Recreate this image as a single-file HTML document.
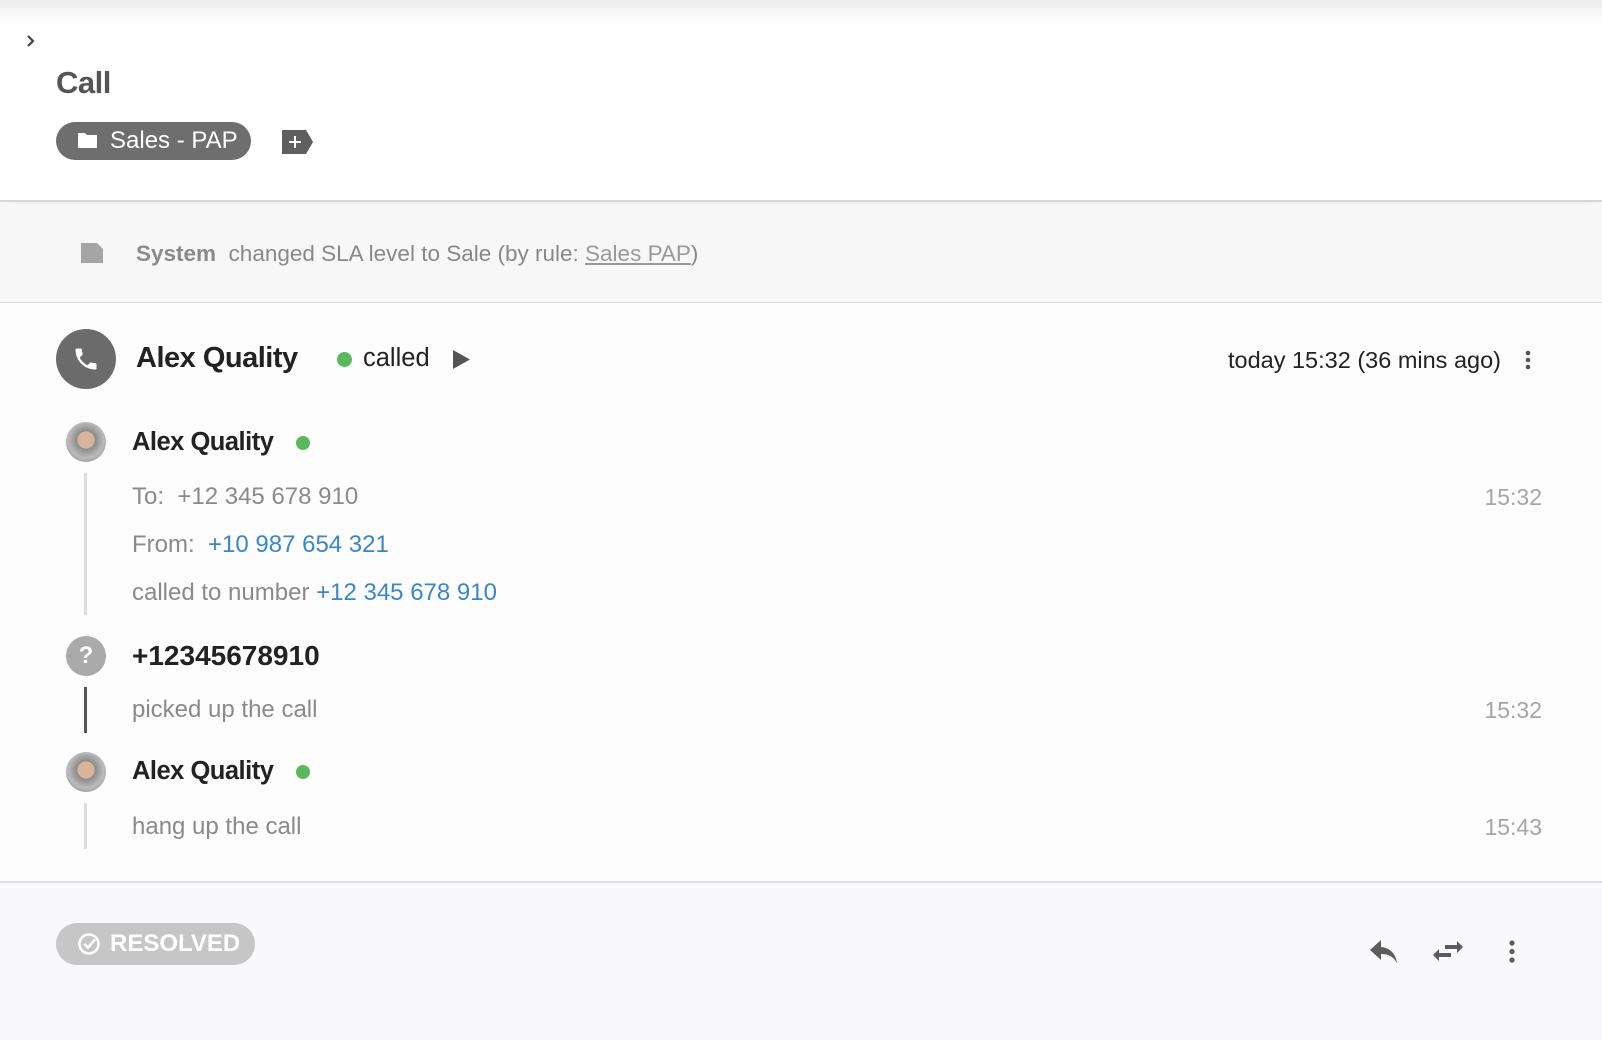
<!DOCTYPE html>
<html><head><meta charset="utf-8"><style>
*{margin:0;padding:0;box-sizing:border-box}
body{width:1602px;height:1040px;overflow:hidden;font-family:"Liberation Sans",Arial,sans-serif;background:#fdfdfd;position:relative;color:#222}
.abs{position:absolute}
.hdr{left:0;top:0;width:1602px;height:202px;background:#fff;border-bottom:2px solid #d6d6d6;box-shadow:0 10px 18px rgba(0,0,0,.06)}
.topsh{left:0;top:0;width:1602px;height:24px;background:linear-gradient(#ececec,#fff)}
.sys{left:0;top:204px;width:1602px;height:99px;background:#f7f7f7;border-bottom:1px solid #ddd}
.t{white-space:nowrap}
.gray{color:#8a8a8a}
.blue{color:#3a86c8}
.dot{width:14px;height:14px;border-radius:50%;background:#5cb85c}
.time{right:60px;color:#a5a5a5;font-size:23px}
.foot{left:0;top:881px;width:1602px;height:159px;background:#f9f8fa;border-top:2px solid #ddd}
.av{width:40px;height:40px;border-radius:50%;background:radial-gradient(circle at 50% 45%,#d8b49a 0 28%,#8a8a8a 30%,#bbb 60%,#777 100%)}
</style></head><body>
<div class="abs hdr"></div>
<div class="abs topsh"></div>
<svg class="abs" style="left:24px;top:34px" width="14" height="14" viewBox="0 0 14 14"><path d="M4 2l5 5-5 5" fill="none" stroke="#444" stroke-width="2.2"/></svg>
<div class="abs t" style="left:56px;top:65px;font-size:31px;font-weight:bold;color:#555;letter-spacing:-0.5px">Call</div>
<div class="abs" style="left:56px;top:122px;width:195px;height:38px;border-radius:19px;background:#6e6e6e"></div>
<svg class="abs" style="left:77px;top:131px" width="22" height="18" viewBox="0 0 22 18"><path d="M1 2h7l2 2h10v13H1z" fill="#fff"/></svg>
<div class="abs t" style="left:110px;top:127px;font-size:24px;color:#fff">Sales - PAP</div>
<svg class="abs" style="left:280px;top:130px" width="34" height="24" viewBox="0 0 34 24"><path d="M2 0h24l7 12-7 12H2z" fill="#5f5f5f"/><path d="M15 6v12M9 12h12" stroke="#fff" stroke-width="2"/></svg>

<div class="abs sys"></div>
<svg class="abs" style="left:79px;top:242px" width="26" height="22" viewBox="0 0 26 22"><path d="M2 1h16l6 6v14H2z" fill="#a5a5a5"/></svg>
<div class="abs t" style="left:136px;top:241px;font-size:22.5px;color:#888"><b style="color:#8a8a8a">System</b>&nbsp; changed SLA level to Sale (by rule: <span style="text-decoration:underline;color:#999">Sales PAP</span>)</div>

<div class="abs" style="left:56px;top:329px;width:60px;height:60px;border-radius:50%;background:#6b6b6b"></div>
<svg class="abs" style="left:72px;top:345px" width="28" height="28" viewBox="0 0 24 24"><path d="M6.6 10.8c1.4 2.8 3.8 5.1 6.6 6.6l2.2-2.2c.3-.3.7-.4 1-.2 1.1.4 2.3.6 3.6.6.6 0 1 .4 1 1V20c0 .6-.4 1-1 1C10.6 21 3 13.4 3 4c0-.6.4-1 1-1h3.5c.6 0 1 .4 1 1 0 1.2.2 2.4.6 3.6.1.3 0 .7-.2 1z" fill="#fff"/></svg>
<div class="abs t" style="left:136px;top:342px;font-size:29px;font-weight:bold;color:#222;letter-spacing:-0.5px">Alex Quality</div>
<div class="abs dot" style="left:337px;top:352px;width:15px;height:15px"></div>
<div class="abs t" style="left:363px;top:344px;font-size:25.5px;color:#222">called</div>
<svg class="abs" style="left:453px;top:350px" width="17" height="19" viewBox="0 0 17 19"><path d="M0 0l17 9.5L0 19z" fill="#555"/></svg>
<div class="abs t" style="right:101px;top:347px;font-size:23.5px;color:#222">today 15:32 (36 mins ago)</div>
<svg class="abs" style="left:1524px;top:350px" width="8" height="20" viewBox="0 0 8 20"><circle cx="4" cy="3" r="2.3" fill="#555"/><circle cx="4" cy="10" r="2.3" fill="#555"/><circle cx="4" cy="17" r="2.3" fill="#555"/></svg>

<div class="abs av" style="left:66px;top:422px"></div>
<div class="abs t" style="left:132px;top:428px;font-size:25.5px;font-weight:bold;letter-spacing:-0.5px">Alex Quality</div>
<div class="abs dot" style="left:296px;top:436px"></div>
<div class="abs" style="left:84px;top:473px;width:3px;height:142px;background:#ddd"></div>
<div class="abs t gray" style="left:132px;top:483px;font-size:24px">To:&nbsp; +12 345 678 910</div>
<div class="abs t time" style="top:484px">15:32</div>
<div class="abs t gray" style="left:132px;top:531px;font-size:24px">From:&nbsp; <span class="blue">+10 987 654 321</span></div>
<div class="abs t gray" style="left:132px;top:579px;font-size:24px">called to number <span class="blue">+12 345 678 910</span></div>

<div class="abs" style="left:66px;top:636px;width:40px;height:40px;border-radius:50%;background:#aaa;color:#fff;font-weight:bold;font-size:24px;text-align:center;line-height:40px">?</div>
<div class="abs t" style="left:132px;top:640px;font-size:28px;font-weight:bold">+12345678910</div>
<div class="abs" style="left:84px;top:687px;width:3px;height:46px;background:#555"></div>
<div class="abs t gray" style="left:132px;top:696px;font-size:24px">picked up the call</div>
<div class="abs t time" style="top:697px">15:32</div>

<div class="abs av" style="left:66px;top:752px"></div>
<div class="abs t" style="left:132px;top:757px;font-size:25.5px;font-weight:bold;letter-spacing:-0.5px">Alex Quality</div>
<div class="abs dot" style="left:296px;top:765px"></div>
<div class="abs" style="left:84px;top:803px;width:3px;height:46px;background:#ddd"></div>
<div class="abs t gray" style="left:132px;top:813px;font-size:24px">hang up the call</div>
<div class="abs t time" style="top:814px">15:43</div>

<div class="abs foot"></div>
<div class="abs" style="left:56px;top:923px;width:199px;height:42px;border-radius:21px;background:#c6c6c6"></div>
<svg class="abs" style="left:77px;top:932px" width="24" height="24" viewBox="0 0 24 24"><circle cx="12" cy="12" r="9.5" fill="none" stroke="#fff" stroke-width="2.6"/><path d="M7.5 12l3.5 3.5 7-8" fill="none" stroke="#fff" stroke-width="2.6"/></svg>
<div class="abs t" style="left:110px;top:930px;font-size:24px;font-weight:bold;color:#fff">RESOLVED</div>
<svg class="abs" style="left:1370px;top:940px" width="28" height="24" viewBox="0 0 28 24"><path d="M11 0L0 10l11 10v-6c7 0 12 2 16 9-1-8-6-15-16-16z" fill="#5c5c5c"/></svg>
<svg class="abs" style="left:1433px;top:940px" width="30" height="22" viewBox="0 0 30 22"><path d="M12 5h12V1l6 6-6 6V9H12zM18 13H6v-4l-6 6 6 6v-4h12z" fill="#5c5c5c"/></svg>
<svg class="abs" style="left:1508px;top:940px" width="8" height="24" viewBox="0 0 8 24"><circle cx="4" cy="3" r="2.6" fill="#5c5c5c"/><circle cx="4" cy="11.5" r="2.6" fill="#5c5c5c"/><circle cx="4" cy="20" r="2.6" fill="#5c5c5c"/></svg>
</body></html>
